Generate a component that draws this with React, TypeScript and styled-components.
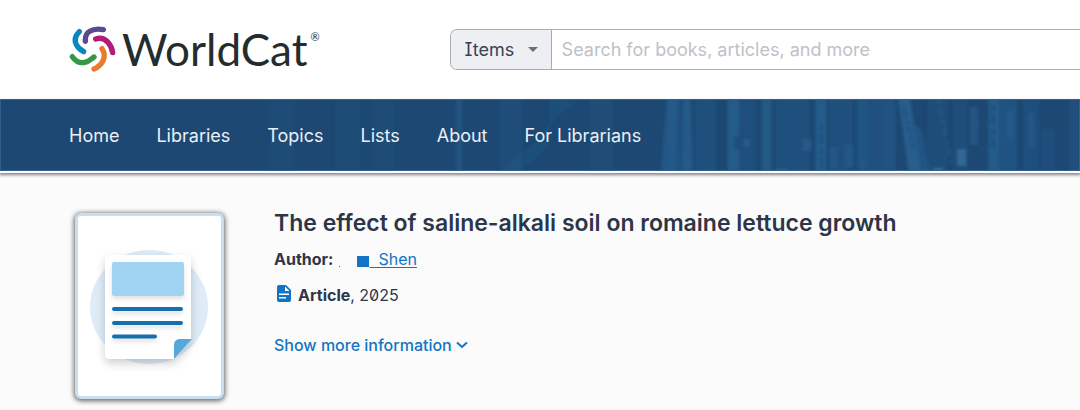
import React from "react";
import styled, { createGlobalStyle } from "styled-components";

const GlobalStyle = createGlobalStyle`
  *, *::before, *::after { box-sizing: border-box; }
  body {
    margin: 0;
    background: #fbfbfb;
    color: #2d3648;
    font-family: Inter, "Liberation Sans", sans-serif;
    font-feature-settings: "zero", "cv08";
    overflow-x: hidden;
  }
`;

const Header = styled.header`
  display: flex;
  align-items: center;
  gap: 130px;
  height: 99px;
  padding: 0 0 1px 69px;
  background: #fff;
`;

const Brand = styled.a`
  display: flex;
  align-items: center;
  gap: 5px;
  color: #242c2e;
  text-decoration: none;
`;

const Wordmark = styled.span`
  font: 400 44px/48px Lato, "Liberation Sans", sans-serif;
`;

const Registered = styled.sup`
  font: 400 11px/12px Lato, "Liberation Sans", sans-serif;
  align-self: flex-start;
  margin: 6px 0 0 -2px;
`;

const SearchForm = styled.form`
  display: flex;
  flex: 1;
  height: 41px;
  border: 1px solid #a9acb5;
  border-right: 0;
  border-radius: 7px 0 0 7px;
  overflow: hidden;
`;

const ScopeBox = styled.div`
  display: flex;
  align-items: center;
  width: 101px;
  padding-right: 13px;
  background: #eeeff3;
  border-right: 1px solid #a9acb5;
`;

const ScopeSelect = styled.select`
  flex: 1;
  min-width: 0;
  height: 100%;
  padding: 0 0 0 14px;
  appearance: none;
  border: 0;
  background: transparent;
  color: #3a4255;
  font: inherit;
  font-size: 18px;
`;

const SearchInput = styled.input`
  flex: 1;
  min-width: 0;
  padding: 0 10px;
  border: 0;
  outline: 0;
  background: #fff;
  color: #2d3648;
  font: inherit;
  font-size: 18px;
  &::placeholder { color: #bfc1c8; opacity: 1; }
`;

const Nav = styled.nav`
  position: relative;
  background: #1c4873;
  border: 1px solid #33608d;
  box-shadow: 0 2px 0 #fff, 0 3px 3px 1px rgba(40, 30, 50, 0.55);
`;

const Shelf = styled.svg`
  position: absolute;
  inset: 0;
  width: 100%;
  height: 100%;
`;

const NavList = styled.ul`
  position: relative;
  display: flex;
  align-items: center;
  gap: 37px;
  margin: 0;
  padding: 24px 0 22px 68px;
  list-style: none;
  line-height: 24px;
`;

const NavLink = styled.a`
  color: #eaf0f6;
  font-size: 18px;
  line-height: 24px;
  text-decoration: none;
`;

const Record = styled.main`
  display: flex;
  align-items: flex-start;
  gap: 50px;
  padding: 42px 20px 11px 75px;
`;

const Cover = styled.div`
  flex: none;
  width: 149px;
  height: 186px;
  border: 3px solid #c9dff0;
  border-radius: 6px;
  background: #fff;
  box-shadow: 0 1px 5px 1px rgba(0, 0, 0, 0.6);
`;

const Details = styled.div`
  display: flex;
  flex-direction: column;
  align-items: flex-start;
`;

const Title = styled.h1`
  margin: -6px 0 8px;
  font-size: 23px;
  font-weight: 600;
  line-height: 32px;
`;

const Line = styled.div`
  display: flex;
  align-items: center;
  margin-bottom: 12px;
  font-size: 16px;
  line-height: 24px;
`;

const AuthorLink = styled.a`
  display: inline-flex;
  align-items: flex-end;
  gap: 17px;
  margin-left: 6px;
  color: #1274c4;
  text-decoration: none;
`;

const AuthorDot = styled.span`
  width: 1px;
  height: 1px;
  margin-bottom: 4px;
  background: #1274c4;
`;

const AuthorName = styled.span`
  text-decoration: underline;
  text-underline-offset: 2px;
`;

const AuthorMark = styled.span`
  display: inline-block;
  width: 12px;
  height: 11px;
  vertical-align: -2px;
  background: #1274c4;
`;

const MoreButton = styled.button`
  display: flex;
  align-items: center;
  gap: 4px;
  margin-top: 14px;
  padding: 0;
  border: 0;
  background: none;
  color: #1274c4;
  font: inherit;
  font-size: 16px;
  font-weight: 500;
  line-height: 24px;
`;

const LogoMark = () => (
  <svg width="48" height="47" viewBox="9 12 144 141" fill="none" strokeWidth="16" strokeLinecap="round" aria-hidden="true">
    <path stroke="#0a87bd" d="M40 29C27 42 25 56 31 68C36 79 44 84 53 89" />
    <path stroke="#5b4a90" d="M58 58C57 44 61 34 71 28C82 21 98 20 112 23" />
    <path stroke="#b01e78" d="M89 51C104 46 116 50 126 61C134 70 139 80 140 92" />
    <path stroke="#ea7b2e" d="M108 80C115 90 117 103 111 116C105 129 96 136 84 141" />
    <path stroke="#359846" d="M19 104C28 117 40 123 53 122C67 121 74 112 84 105" />
  </svg>
);

/* x, y, width, height, colour, opacity */
const spines: [number, number, number, number, string, number][] = [
  [270, 0, 24, 72, "#25547f", 0.3],
  [335, 0, 26, 72, "#25547f", 0.3],
  [372, 0, 22, 72, "#23537f", 0.3],
  [456, 0, 6, 72, "#28608f", 0.5],
  [500, 0, 22, 72, "#205280", 0.5],
  [590, 0, 24, 72, "#205280", 0.4],
  [668, 0, 12, 72, "#23598a", 0.7],
  [682, 0, 10, 72, "#225786", 0.7],
  [696, 0, 20, 72, "#1f5180", 0.8],
  [728, 0, 12, 72, "#28608f", 0.8],
  [742, 0, 14, 72, "#215484", 0.6],
  [762, 0, 10, 72, "#235b8a", 0.9],
  [776, 0, 34, 72, "#1f5180", 0.8],
  [816, 0, 11, 72, "#265d8e", 0.9],
  [830, 0, 24, 72, "#1f5280", 0.8],
  [858, 0, 10, 72, "#235a8a", 0.8],
  [868, 0, 16, 72, "#1f5382", 0.8],
  [884, 0, 12, 72, "#225686", 0.8],
  [928, 0, 20, 72, "#1f5180", 0.5],
  [954, 0, 14, 72, "#205382", 0.5],
  [989, 0, 11, 72, "#255c8c", 0.9],
  [1000, 0, 18, 72, "#215586", 0.8],
  [1024, 0, 16, 72, "#205280", 0.7],
  [1042, 30, 14, 42, "#215485", 0.5],
  [1070, 0, 10, 72, "#1f5180", 0.8],
  [734, 38, 6, 12, "#1c4873", 0.6],
  [744, 40, 6, 8, "#2c6394", 0.6],
  [803, 40, 9, 12, "#33699a", 0.4],
  [830, 48, 8, 22, "#285d8e", 0.6],
  [845, 46, 9, 22, "#285d8e", 0.6],
  [958, 50, 9, 17, "#35699a", 0.9],
  [971, 8, 8, 38, "#275d8d", 0.7],
  [1008, 12, 7, 28, "#285f90", 0.5],
  [1029, 14, 6, 34, "#285f90", 0.5],
  [776, 70, 12, 2, "#3d709f", 0.6],
  [934, 69, 10, 3, "#3d709f", 0.8],
];

const ShelfArt = () => (
  <Shelf viewBox="0 0 1080 72" preserveAspectRatio="xMidYMid slice" aria-hidden="true">
    <defs>
      <filter id="soft"><feGaussianBlur stdDeviation="1.6 1.2" /></filter>
    </defs>
    <g filter="url(#soft)">
      {spines.map(([x, y, w, h, fill, opacity]) => (
        <rect key={`${x}-${y}`} x={x} y={y} width={w} height={h} fill={fill} opacity={opacity} />
      ))}
      <path d="M549 0H578L550 26V46L520 72H500L534 44L549 26Z" fill="#235c8a" opacity="0.35" />
      <path d="M667 0H678L674 72H661Z" fill="#265f8f" opacity="0.6" />
      <path d="M684 0H690L694 72H681Z" fill="#2b6596" opacity="0.4" />
      <path d="M899 0H911L922 72H909Z" fill="#285f90" opacity="0.9" />
      <path d="M912 22L922 30L930 72H922Z" fill="#235888" opacity="0.8" />
      <path d="M939 0L952 64" stroke="#28608f" strokeWidth="4" strokeDasharray="5 3 9 4" opacity="0.4" />
      <path d="M904 6L914 50" stroke="#1d4f7e" strokeWidth="4" strokeDasharray="4 2 7 3" opacity="0.5" />
      <path d="M822 26V68M994 6V52" stroke="#1b4b78" strokeWidth="4" strokeDasharray="6 3 10 5" opacity="0.5" />
      <path d="M863 4V64M835 8V66M977 2V48" stroke="#1b4b78" strokeWidth="3" strokeDasharray="4 4 7 3" opacity="0.3" />
    </g>
  </Shelf>
);

const CoverArt = () => (
  <svg width="143" height="180" viewBox="78 216 143 180" role="img" aria-label="Article cover">
    <defs>
      <filter id="paper" x="-30%" y="-30%" width="160%" height="160%">
        <feDropShadow dx="0" dy="4" stdDeviation="5" floodColor="#000" floodOpacity="0.2" />
      </filter>
      <filter id="ink" x="-20%" y="-20%" width="140%" height="150%">
        <feDropShadow dx="0" dy="3" stdDeviation="2" floodColor="#000" floodOpacity="0.12" />
      </filter>
    </defs>
    <ellipse cx="149" cy="307" rx="59" ry="57" fill="#dfecf8" />
    <path filter="url(#paper)" fill="#fff" d="M110 255H186Q191 255 191 260V340L174 359H110Q105 359 105 354V260Q105 255 110 255Z" />
    <g filter="url(#ink)">
      <rect x="112" y="262" width="72" height="34" rx="2" fill="#a1d4f3" />
      <rect x="112" y="307" width="71" height="4" rx="2" fill="#166fab" />
      <rect x="112" y="321" width="71" height="4" rx="2" fill="#166fab" />
      <rect x="112" y="334.500" width="45" height="4" rx="2" fill="#166fab" />
    </g>
    <path fill="#54a8da" d="M174 359V345Q174 340 179 339L192 339Z" />
  </svg>
);

const navItems = ["Home", "Libraries", "Topics", "Lists", "About", "For Librarians"];

export default function App() {
  return (
    <>
      <GlobalStyle />
      <Header>
        <Brand href="#" aria-label="WorldCat">
          <LogoMark />
          <Wordmark>WorldCat</Wordmark>
          <Registered>®</Registered>
        </Brand>
        <SearchForm role="search">
          <ScopeBox>
            <ScopeSelect aria-label="Search scope">
              <option>Items</option>
            </ScopeSelect>
            <svg width="10" height="5" viewBox="0 0 10 5" aria-hidden="true"><path d="M0 0H10L5 5Z" fill="#6f7075" /></svg>
          </ScopeBox>
          <SearchInput type="search" aria-label="Search" placeholder="Search for books, articles, and more" />
        </SearchForm>
      </Header>
      <Nav aria-label="Main">
        <ShelfArt />
        <NavList>
          {navItems.map((item) => (
            <li key={item}><NavLink href="#">{item}</NavLink></li>
          ))}
        </NavList>
      </Nav>
      <Record>
        <Cover><CoverArt /></Cover>
        <Details>
          <Title>The effect of saline-alkali soil on romaine lettuce growth</Title>
          <Line>
            <strong>Author:</strong>
            <AuthorLink href="#">
              <AuthorDot />
              <AuthorName><AuthorMark />&nbsp; Shen</AuthorName>
            </AuthorLink>
          </Line>
          <Line>
            <svg width="24" height="20" viewBox="0 0 24 20" aria-hidden="true">
              <path fill="#1274c4" d="M5 0H12L17 5V15Q17 17 15 17H5Q3 17 3 15V2Q3 0 5 0Z" />
              <path fill="#fff" d="M11 1.500L15.500 6H11ZM5 8.500H15V10H5ZM5 12H12V13.500H5Z" />
            </svg>
            <span><strong>Article</strong>, 2025</span>
          </Line>
          <MoreButton type="button">
            Show more information
            <svg width="12" height="8" viewBox="0 0 12 8" fill="none" stroke="#1274c4" strokeWidth="2" aria-hidden="true"><path d="M1 1.500L6 6L11 1.500" /></svg>
          </MoreButton>
        </Details>
      </Record>
    </>
  );
}
